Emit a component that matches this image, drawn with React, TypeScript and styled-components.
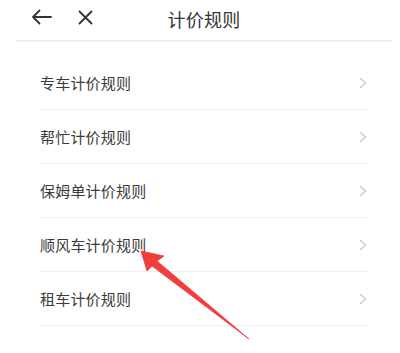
import React from "react";
import styled, { createGlobalStyle } from "styled-components";

const Global = createGlobalStyle`
  html, body { margin: 0; padding: 0; background: #ffffff; }
  body { font-family: "Noto Sans CJK SC", "Noto Sans", sans-serif; }
`;

const Page = styled.div`
  position: relative;
  width: 400px;
  height: 353px;
  background: #fff;
  overflow: hidden;
`;

const Header = styled.header`
  height: 40px;
  margin: 0 8px 0 16px;
  border-bottom: 1px solid #ececec;
  box-shadow: 0 1px 1px rgba(0, 0, 0, 0.03);
  display: grid;
  grid-template-columns: 1fr auto 1fr;
  align-items: center;
`;

const Left = styled.div`
  display: flex;
  align-items: center;
  gap: 26px;
  padding-left: 15px;
  margin-top: -6px;
`;

const IconBtn = styled.span`
  display: flex;
  color: #333;
`;

const Title = styled.h1`
  margin: 0;
  margin-top: -3px;
  font-size: 18px;
  font-weight: 400;
  color: #333;
  letter-spacing: 0.3px;
`;

const List = styled.ul`
  list-style: none;
  margin: 15px 32px 0 40px;
  padding: 0;
`;

const Row = styled.li`
  height: 53px;
  border-bottom: 1px solid #f0f0f0;
  display: flex;
  align-items: center;
  justify-content: space-between;
`;

const Label = styled.span`
  font-size: 15px;
  color: #3a3a3a;
  letter-spacing: 0.2px;
`;

const Chevron = styled.svg`
  width: 8px;
  height: 12px;
  margin-right: 1px;
`;

const Pointer = styled.svg`
  position: absolute;
  left: 0;
  top: 0;
  pointer-events: none;
`;

const items = ["专车计价规则", "帮忙计价规则", "保姆单计价规则", "顺风车计价规则", "租车计价规则"];

export default function App() {
  return (
    <Page>
      <Global />
      <Header>
        <Left>
          <IconBtn>
            <svg width="21" height="16" viewBox="0 0 21 16" fill="none" stroke="#333" strokeWidth="1.8" strokeLinecap="round" strokeLinejoin="round">
              <path d="M20 8H2M8.5 1.5L2 8l6.5 6.5" />
            </svg>
          </IconBtn>
          <IconBtn>
            <svg width="15" height="15" viewBox="0 0 15 15" fill="none" stroke="#333" strokeWidth="1.8" strokeLinecap="round">
              <path d="M1.5 1.5l12 12M13.5 1.5l-12 12" />
            </svg>
          </IconBtn>
        </Left>
        <Title>计价规则</Title>
        <div />
      </Header>
      <List>
        {items.map((t) => (
          <Row key={t}>
            <Label>{t}</Label>
            <Chevron viewBox="0 0 8 12" fill="none" stroke="#c8c8c8" strokeWidth="1.3" strokeLinecap="round" strokeLinejoin="round">
              <path d="M1.5 1.5L6.5 6l-5 4.5" />
            </Chevron>
          </Row>
        ))}
      </List>
      <Pointer width="400" height="353" viewBox="0 0 400 353">
        <polygon
          points="141,251 164,256 157,261 249,339 152,266 147,271"
          fill="#f23d3d"
          stroke="#f23d3d"
          strokeWidth="0.8"
          strokeLinejoin="round"
        />
      </Pointer>
    </Page>
  );
}
